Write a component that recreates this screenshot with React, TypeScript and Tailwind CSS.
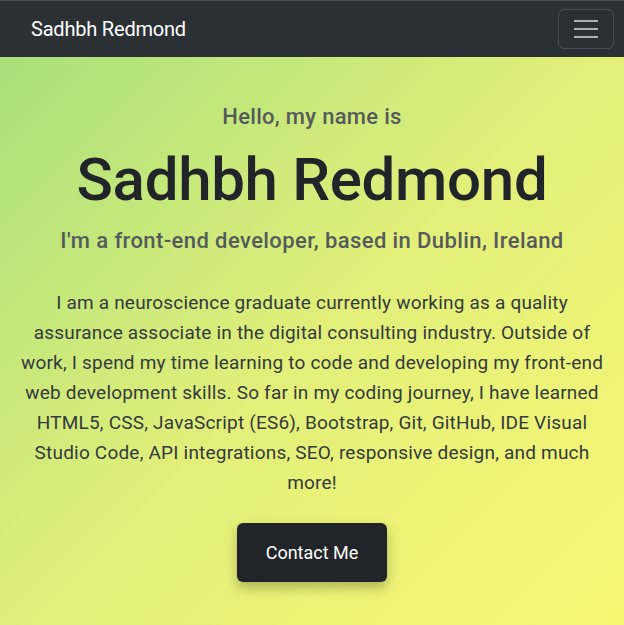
import React from "react";

const lines = [
  "I am a neuroscience graduate currently working as a quality",
  "assurance associate in the digital consulting industry. Outside of",
  "work, I spend my time learning to code and developing my front-end",
  "web development skills. So far in my coding journey, I have learned",
  "HTML5, CSS, JavaScript (ES6), Bootstrap, Git, GitHub, IDE Visual",
  "Studio Code, API integrations, SEO, responsive design, and much",
  "more!",
];

export default function App() {
  return (
    <div className="min-h-[625px] flex flex-col" style={{ fontFamily: "Roboto, 'Liberation Sans', sans-serif" }}>
      <nav className="h-[57px] bg-[#2b3035] border-t border-[#4b4f53] flex items-center justify-between pl-[31px] pr-[10px] shrink-0">
        <span className="text-white text-[20px] tracking-[-0.2px]">Sadhbh Redmond</span>
        <button className="w-[56px] h-[40px] border border-white/15 rounded-[6px] flex flex-col items-center justify-center gap-[6px]">
          <span className="block w-[24px] h-[2px] bg-[#aeb0b2]" />
          <span className="block w-[24px] h-[2px] bg-[#aeb0b2]" />
          <span className="block w-[24px] h-[2px] bg-[#aeb0b2]" />
        </button>
      </nav>
      <main className="flex-1 bg-[linear-gradient(135deg,#a8e07c_0%,#e2ef79_50%,#f8f774_100%)] flex flex-col items-center text-center px-[12px] pt-[45px] pb-[44px]">
        <p className="text-[22px] font-medium text-[#555a5c] leading-[30px] tracking-[0.3px]">Hello, my name is</p>
        <h1 className="text-[60px] font-medium text-[#212529] leading-[70px] mt-[13px] tracking-[-0.3px]">Sadhbh Redmond</h1>
        <h2 className="text-[22px] font-medium text-[#555a5c] leading-[30px] mt-[11px] tracking-[0.4px]">I'm a front-end developer, based in Dublin, Ireland</h2>
        <p className="text-[19px] leading-[30px] text-[#343a40] mt-[32px] tracking-[0.2px]">
          {lines.map((l, i) => (
            <span key={i} className="block whitespace-nowrap">{l}</span>
          ))}
        </p>
        <button className="mt-[25px] w-[150px] h-[59px] bg-[#212529] text-white text-[18px] rounded-[6px] shadow-[0_6px_12px_rgba(0,0,0,0.25)]">
          Contact Me
        </button>
      </main>
    </div>
  );
}
